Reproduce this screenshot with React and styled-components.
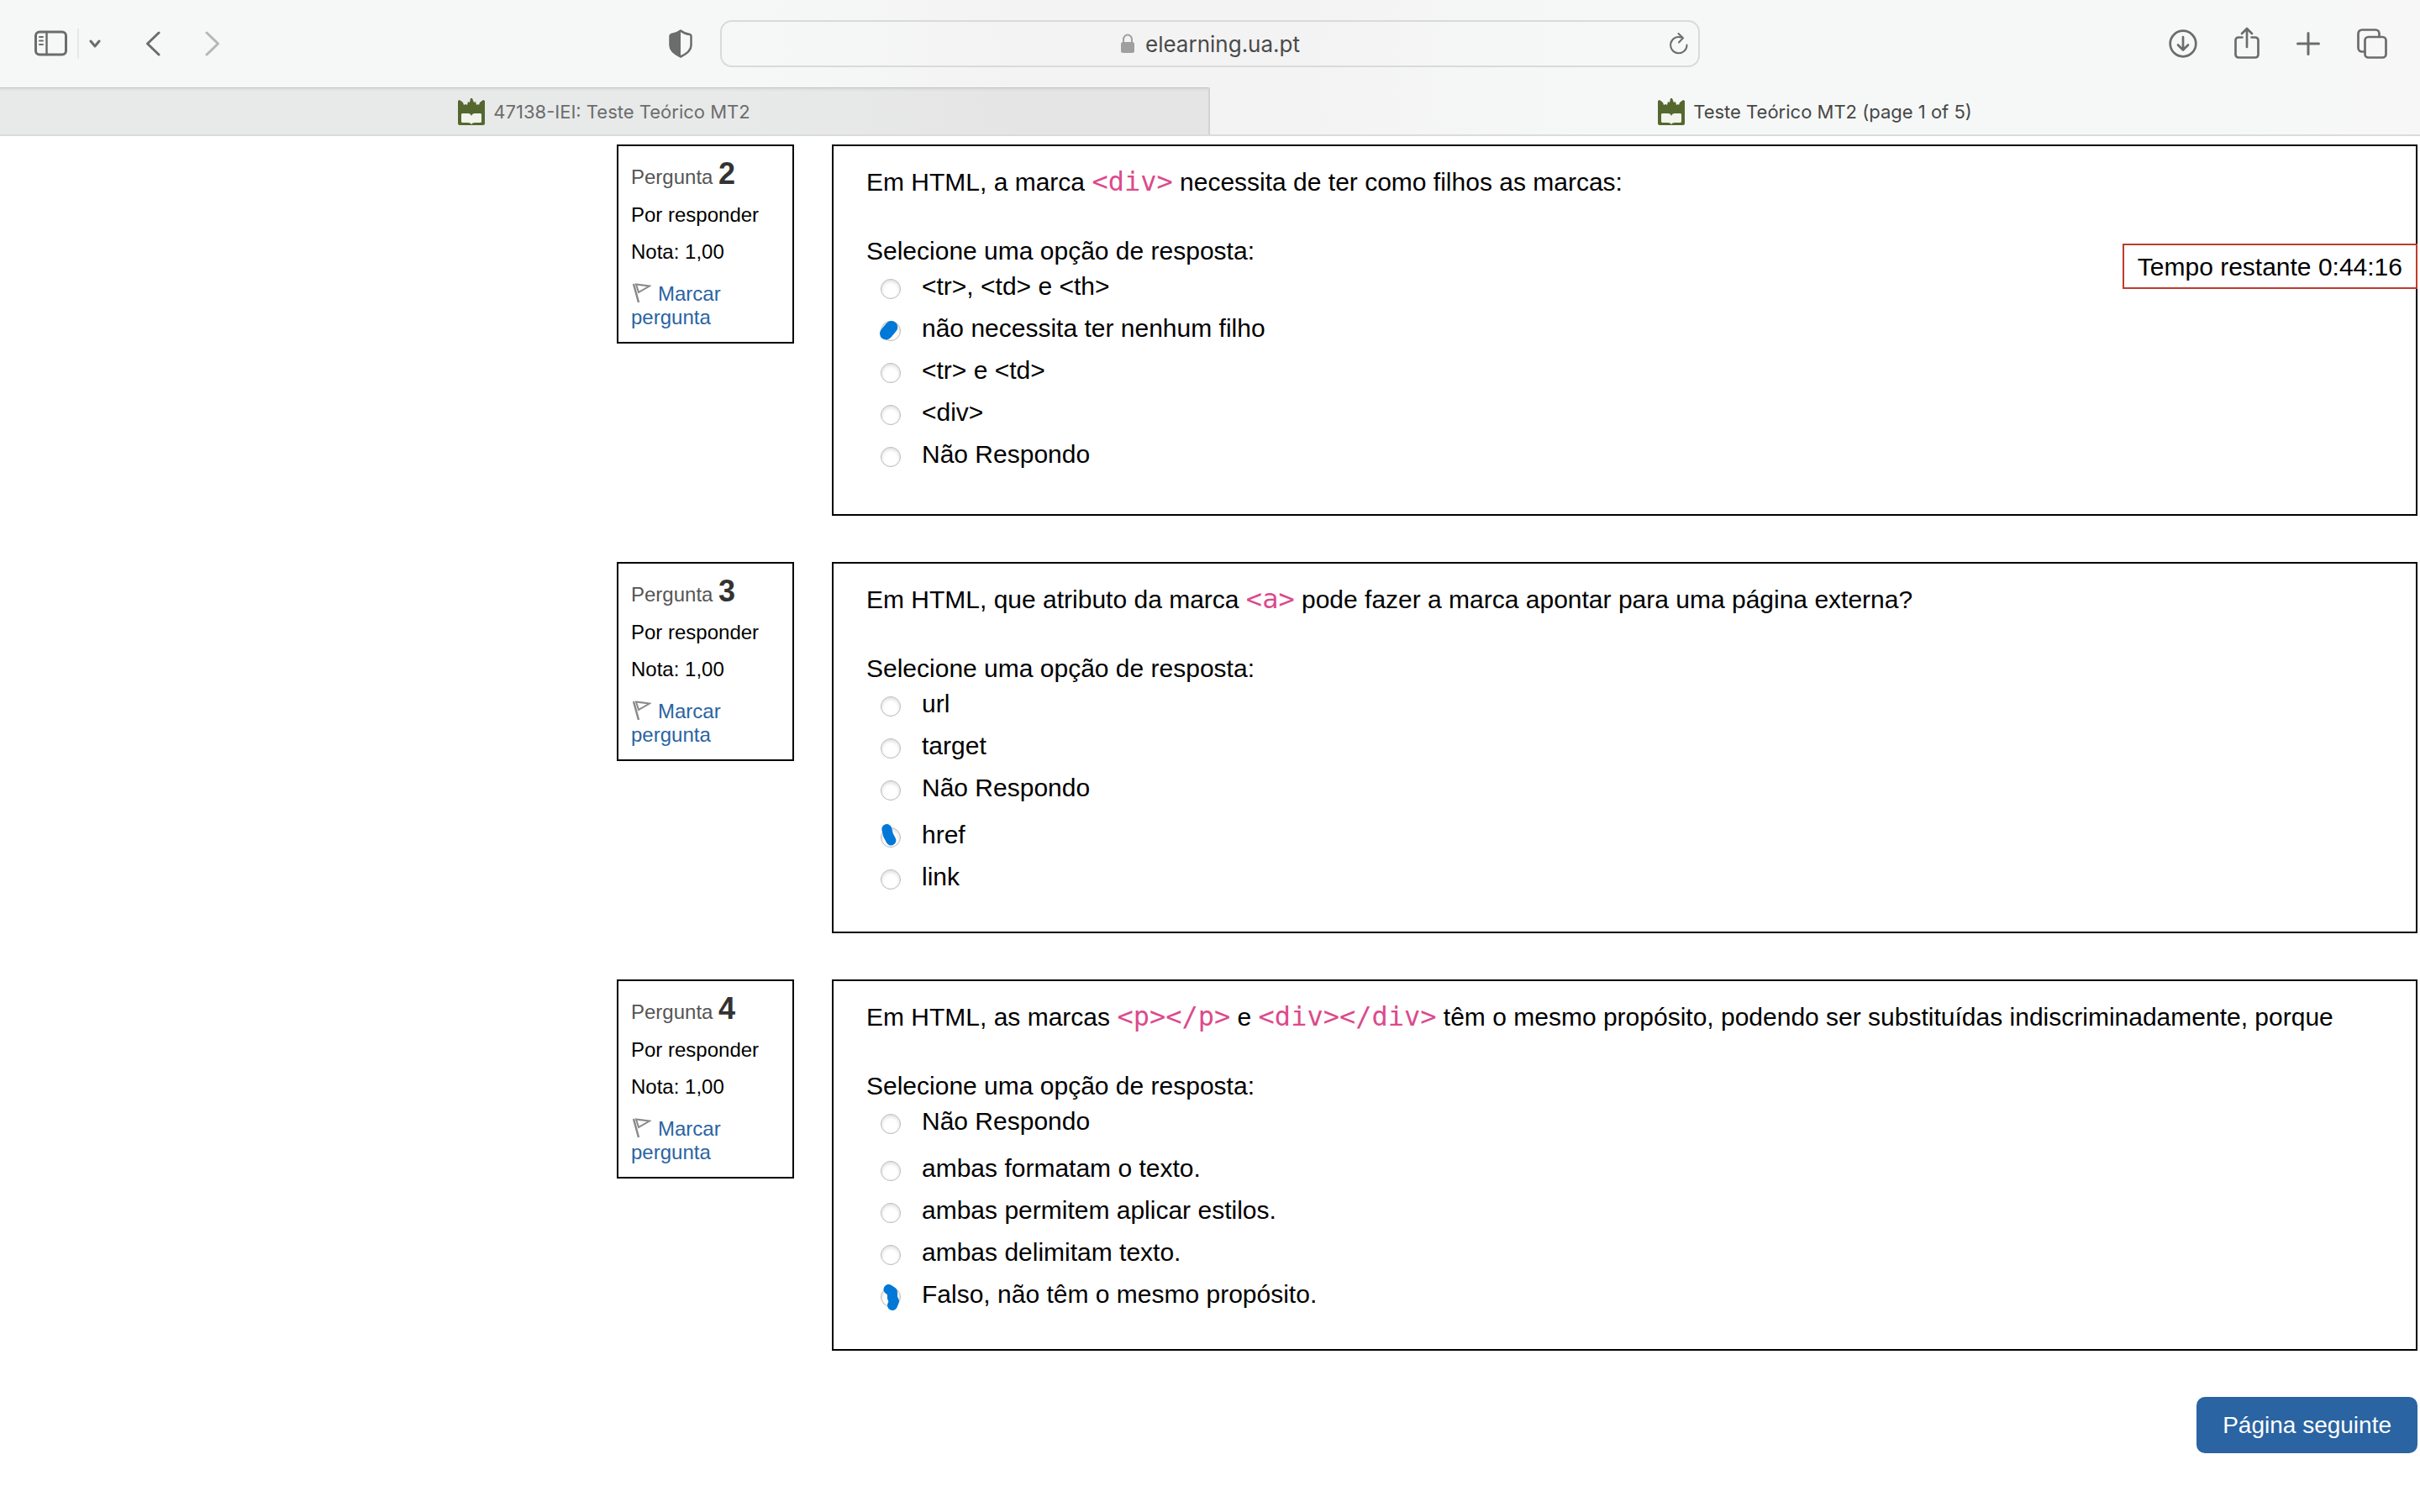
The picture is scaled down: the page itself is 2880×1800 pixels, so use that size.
import React from "react";
import styled, { createGlobalStyle } from "styled-components";

const GlobalStyle = createGlobalStyle`
  *, *::before, *::after { box-sizing: border-box; }
  body {
    margin: 0;
    background: #fff;
    color: #000;
    font-family: "Liberation Sans", Arial, Helvetica, sans-serif;
    font-size: 30px;
    line-height: 36px;
  }
`;

const chromeFont = `Inter, "Liberation Sans", sans-serif`;

/* ---------- browser chrome ---------- */

const BrowserHeader = styled.header`
  background: linear-gradient(90deg, #f6f8f7 30%, #f3f3f3 42%, #f3f3f3 54%, #f6f8f7 66%, #f6f8f7 92%, #f7f7f7);
  border-bottom: 2px solid #dadbdb;
  font-family: ${chromeFont};
`;

const Toolbar = styled.div`
  display: grid;
  grid-template-columns: 1fr minmax(0, 1166px) 1fr;
  align-items: center;
  padding: 24px 39px;
`;

const ToolGroup = styled.div`
  display: flex;
  align-items: center;
  justify-content: ${(p) => (p.$end ? "flex-end" : "flex-start")};
  gap: ${(p) => p.$gap}px;
`;

const LeftTools = styled(ToolGroup)`
  padding: 0 33px 0 2px;
`;

const ToolButton = styled.button`
  display: flex;
  padding: 0;
  border: 0;
  background: none;
  color: ${(p) => (p.$faded ? "#b6b8b7" : "#6b6c6c")};
  margin-left: ${(p) => (p.$push ? "auto" : "0")};
`;

const ToolDivider = styled.span`
  width: 2px;
  height: 36px;
  background: #e6e8e7;
`;

const AddressBar = styled.form`
  display: grid;
  grid-template-columns: 1fr auto 1fr;
  align-items: center;
  height: 56px;
  padding: 0 12px;
  border: 2px solid #d9dada;
  border-radius: 14px;
`;

const AddressCenter = styled.label`
  grid-column: 2;
  display: flex;
  align-items: center;
  gap: 12px;
`;

const AddressInput = styled.input`
  width: 184px;
  padding: 2px 0 0;
  border: 0;
  outline: 0;
  background: none;
  color: #4a4a4a;
  font: 26px/32px ${chromeFont};
`;

const ReloadButton = styled(ToolButton)`
  justify-self: end;
`;

const TabBar = styled.nav`
  display: grid;
  grid-template-columns: 1fr 1fr;
`;

const Tab = styled.a`
  display: flex;
  align-items: center;
  justify-content: center;
  gap: 10px;
  height: 56px;
  padding-top: 2px;
  font-size: 22px;
  line-height: 28px;
  text-decoration: none;
  color: ${(p) => (p.$active ? "#464747" : "#6c6d6d")};
  background: ${(p) => (p.$active ? "transparent" : "rgba(0, 0, 0, 0.055)")};
  border-right: ${(p) => (p.$active ? "0" : "2px solid #d2d3d3")};
  box-shadow: ${(p) => (p.$active ? "none" : "inset 0 1px 0 #c3c5c4, inset 0 6px 3px -3px rgba(0, 0, 0, 0.06)")};
`;

/* ---------- quiz ---------- */

const Page = styled.main`
  position: relative;
  display: flex;
  flex-direction: column;
  gap: 55px;
  padding: 10px 3px 48px 734px;
`;

const Question = styled.article`
  display: flex;
  align-items: flex-start;
  gap: 45px;
`;

const Info = styled.section`
  flex: none;
  display: flex;
  flex-direction: column;
  gap: 16px;
  width: 211px;
  padding: 17px 14px 15px 15px;
  border: 2px solid #000;
  font-size: 24px;
  line-height: 28px;
`;

const InfoTitle = styled.h3`
  margin: 0;
  font-size: 24px;
  font-weight: 400;
  line-height: 30px;
  color: #555;
`;

const InfoNumber = styled.span`
  font-size: 36px;
  font-weight: 700;
  line-height: 32px;
  color: #333;
`;

const FlagLink = styled.a`
  padding-top: 6px;
  color: #2a64a2;
  text-decoration: none;

  svg {
    margin-right: 8px;
    vertical-align: -3px;
  }
`;

const Content = styled.section`
  flex: 1;
  min-width: 0;
  padding: 25px 38px 47px 39px;
  border: 2px solid #000;
`;

const Statement = styled.p`
  margin: 0 0 46px;
`;

const Code = styled.code`
  font: 32px/32px "DejaVu Sans Mono", monospace;
  color: #dc4a8c;
`;

const Answers = styled.fieldset`
  margin: 0;
  padding: 0;
  border: 0;
  min-width: 0;
`;

const Prompt = styled.legend`
  padding: 0 0 6px;
`;

const OptionList = styled.div`
  display: flex;
  flex-direction: column;
  gap: 14px;
  min-height: 242px;
  padding-left: 17px;
`;

const Option = styled.label`
  display: flex;
  align-items: flex-start;
  gap: 25px;
  padding-top: ${(p) => (p.$spaced ? "6px" : "0")};
`;

const RadioWrap = styled.span`
  position: relative;
  flex: none;
  display: flex;
  margin-top: 9px;
`;

const Radio = styled.input.attrs({ type: "radio" })`
  appearance: none;
  width: 24px;
  height: 24px;
  margin: 0;
  border: 1px solid #b9b9b9;
  border-radius: 50%;
  background: #fff;
  box-shadow: inset 0 2px 4px rgba(0, 0, 0, 0.14);
`;

const InkMark = styled.svg`
  position: absolute;
  inset: -6px;
  width: 36px;
  height: 36px;
  pointer-events: none;
`;

const Timer = styled.div`
  position: absolute;
  top: 128px;
  right: 3px;
  padding: 8px 16px 6px;
  border: 2px solid #bf3b2c;
  background: #fff;
  white-space: nowrap;
`;

const NextButton = styled.button`
  align-self: flex-end;
  padding: 12px 31px;
  border: 0;
  border-radius: 10px;
  background: #2a64a2;
  color: #fff;
  font: 28px/43px "Liberation Sans", Arial, sans-serif;
`;

/* ---------- drawings ---------- */

const Drawing = ({ w, h, sw = 3, children }) => (
  <svg width={w} height={h} viewBox={`0 0 ${w} ${h}`} fill="none" stroke="currentColor"
    strokeWidth={sw} strokeLinecap="round" strokeLinejoin="round" aria-hidden="true">
    {children}
  </svg>
);

const SidebarIcon = () => (
  <Drawing w={39} h={32}>
    <rect x="1.5" y="2" width="36" height="27" rx="4.5" />
    <path d="M14.500 2v27" strokeWidth="2.5" />
    <path d="M6 8h4M6 12.500h4M6 17h4" strokeWidth="2" />
  </Drawing>
);
const SmallChevron = () => (
  <Drawing w={14} h={10}><path d="M2 2l5 6 5-6" /></Drawing>
);
const BackIcon = () => (
  <Drawing w={18} h={30}><path d="M16 2L2.500 15 16 28" /></Drawing>
);
const ForwardIcon = () => (
  <Drawing w={18} h={30}><path d="M2 2l13.500 13L2 28" /></Drawing>
);
const ShieldIcon = () => (
  <Drawing w={28} h={34} sw={2.5}>
    <path d="M14 1.500c3 2.500 7 4 11 4.500 1 .3 1.500.9 1.500 2v11c0 6-5 10-12.500 13.500C6.500 29 1.500 25 1.500 19V8c0-1.100.5-1.700 1.500-2 4-.5 8-2 11-4.500z" />
    <path d="M14 1.500v31C6.500 29 1.500 25 1.500 19V8c0-1.100.5-1.700 1.500-2 4-.5 8-2 11-4.500z" fill="currentColor" stroke="none" />
  </Drawing>
);
const LockIcon = () => (
  <svg width="18" height="24" viewBox="0 0 18 24" fill="none" aria-hidden="true">
    <rect x="1" y="10" width="16" height="13" rx="2.500" fill="#9f9f9f" />
    <path d="M4 11V7a5 5.500 0 0 1 10 0v4" stroke="#9f9f9f" strokeWidth="2" />
  </svg>
);
const ReloadIcon = () => (
  <Drawing w={22} h={26} sw={2}>
    <path d="M20.500 14.500A9.700 9.700 0 1 1 14 5.500" />
    <path d="M10.500 1l5.500 5.200-5 5.300" />
  </Drawing>
);
const DownloadIcon = () => (
  <Drawing w={34} h={34} sw={2.7}>
    <circle cx="17" cy="17" r="15.300" />
    <path d="M17 9v15M11 18.500l6 6 6-6" />
  </Drawing>
);
const ShareIcon = () => (
  <Drawing w={30} h={40} sw={2.7}>
    <path d="M9.500 12.500H5A3.500 3.500 0 0 0 1.500 16v17A3.500 3.500 0 0 0 5 36.500h20a3.500 3.500 0 0 0 3.500-3.500V16a3.500 3.500 0 0 0-3.500-3.500h-4.500" />
    <path d="M15 24V2M9 8l6-6 6 6" />
  </Drawing>
);
const PlusIcon = () => (
  <Drawing w={28} h={28}><path d="M14 1.500v25M1.500 14h25" /></Drawing>
);
const TabsIcon = () => (
  <Drawing w={36} h={36} sw={2.7}>
    <rect x="9.500" y="10" width="25" height="24.500" rx="4" />
    <path d="M9 27.500H6A4.500 4.500 0 0 1 1.500 23V6A4.500 4.500 0 0 1 6 1.500h16A4.500 4.500 0 0 1 26.500 6v3.500" />
  </Drawing>
);
const CrestIcon = () => (
  <svg width="32" height="32" viewBox="0 0 32 32" aria-hidden="true">
    <path d="M0 3l2-1 4 3 1 3 2-1 2 1 1-4 2 1 1-5h2l2 5 2-1 1 4 2-1 1 1 1-3 4-3 2 1v27q0 2-2 2H2q-2 0-2-2z" fill="#55672f" />
    <path d="M4 19q0-1 2-1h6q3 0 4 3 1-3 4-3h6q2 0 2 1v9q0 1-2 1h-6q-3 0-4 2-1-2-4-2H6q-2 0-2-1z" fill="#f1f3ec" />
  </svg>
);
const FlagIcon = () => (
  <svg width="24" height="24" viewBox="0 0 24 24" fill="none" stroke="#8a8a8a" strokeWidth="2" aria-hidden="true">
    <path d="M3 1l6 22" strokeWidth="2.500" />
    <path d="M6 1.500l16 2L9 11z" />
  </svg>
);

/* Ink drawn over the chosen radio; the origin sits 6px outside the circle. */
const inkPaths = {
  wide: { d: "M18.800 13.500L12.500 21", width: 15 },
  slanted: { d: "M13.300 8L15 15L18.400 21.500", width: 12 },
  long: { d: "M15.500 9L20 12L20 19L22 23L20 28", width: 12 },
};

const Ink = ({ kind }) => (
  <InkMark viewBox="0 0 36 36" fill="none" stroke="#0078d8" strokeLinecap="round"
    strokeLinejoin="round" strokeWidth={inkPaths[kind].width} aria-hidden="true">
    <path d={inkPaths[kind].d} />
  </InkMark>
);

/* ---------- data ---------- */

const questions = [
  {
    number: 2,
    statement: <>Em HTML, a marca <Code>{"<div>"}</Code> necessita de ter como filhos as marcas:</>,
    options: [
      { text: "<tr>, <td> e <th>" },
      { text: "não necessita ter nenhum filho", ink: "wide" },
      { text: "<tr> e <td>" },
      { text: "<div>" },
      { text: "Não Respondo" },
    ],
  },
  {
    number: 3,
    statement: <>Em HTML, que atributo da marca <Code>{"<a>"}</Code> pode fazer a marca apontar para uma página externa?</>,
    options: [
      { text: "url" },
      { text: "target" },
      { text: "Não Respondo" },
      { text: "href", ink: "slanted", spaced: true },
      { text: "link" },
    ],
  },
  {
    number: 4,
    statement: (
      <>
        Em HTML, as marcas <Code>{"<p></p>"}</Code> e <Code>{"<div></div>"}</Code> têm o mesmo propósito, podendo ser
        substituídas indiscriminadamente, porque
      </>
    ),
    options: [
      { text: "Não Respondo" },
      { text: "ambas formatam o texto.", spaced: true },
      { text: "ambas permitem aplicar estilos." },
      { text: "ambas delimitam texto." },
      { text: "Falso, não têm o mesmo propósito.", ink: "long" },
    ],
  },
];

const QuestionBlock = ({ number, statement, options }) => (
  <Question>
    <Info>
      <InfoTitle>Pergunta <InfoNumber>{number}</InfoNumber></InfoTitle>
      <div>Por responder</div>
      <div>Nota: 1,00</div>
      <FlagLink href="#"><FlagIcon />Marcar pergunta</FlagLink>
    </Info>
    <Content>
      <Statement>{statement}</Statement>
      <Answers>
        <Prompt>Selecione uma opção de resposta:</Prompt>
        <OptionList>
          {options.map((o) => (
            <Option key={o.text} $spaced={o.spaced}>
              <RadioWrap>
                <Radio name={`q${number}`} defaultChecked={Boolean(o.ink)} />
                {o.ink && <Ink kind={o.ink} />}
              </RadioWrap>
              <span>{o.text}</span>
            </Option>
          ))}
        </OptionList>
      </Answers>
    </Content>
  </Question>
);

export default function App() {
  return (
    <>
      <GlobalStyle />
      <BrowserHeader>
        <Toolbar>
          <LeftTools $gap={53}>
            <ToolGroup $gap={12}>
              <ToolButton aria-label="Sidebar"><SidebarIcon /></ToolButton>
              <ToolDivider />
              <ToolButton aria-label="Tab groups"><SmallChevron /></ToolButton>
            </ToolGroup>
            <ToolButton aria-label="Back"><BackIcon /></ToolButton>
            <ToolButton aria-label="Forward" $faded><ForwardIcon /></ToolButton>
            <ToolButton aria-label="Privacy report" $push><ShieldIcon /></ToolButton>
          </LeftTools>
          <AddressBar>
            <AddressCenter>
              <LockIcon />
              <AddressInput aria-label="Address" defaultValue="elearning.ua.pt" />
            </AddressCenter>
            <ReloadButton type="button" aria-label="Reload"><ReloadIcon /></ReloadButton>
          </AddressBar>
          <ToolGroup $gap={44} $end>
            <ToolButton aria-label="Downloads"><DownloadIcon /></ToolButton>
            <ToolButton aria-label="Share"><ShareIcon /></ToolButton>
            <ToolButton aria-label="New tab"><PlusIcon /></ToolButton>
            <ToolButton aria-label="Tab overview"><TabsIcon /></ToolButton>
          </ToolGroup>
        </Toolbar>
        <TabBar>
          <Tab href="#"><CrestIcon />47138-IEI: Teste Teórico MT2</Tab>
          <Tab href="#" $active><CrestIcon />Teste Teórico MT2 (page 1 of 5)</Tab>
        </TabBar>
      </BrowserHeader>
      <Page>
        {questions.map((q) => (
          <QuestionBlock key={q.number} {...q} />
        ))}
        <NextButton type="button">Página seguinte</NextButton>
        <Timer role="timer">Tempo restante 0:44:16</Timer>
      </Page>
    </>
  );
}
